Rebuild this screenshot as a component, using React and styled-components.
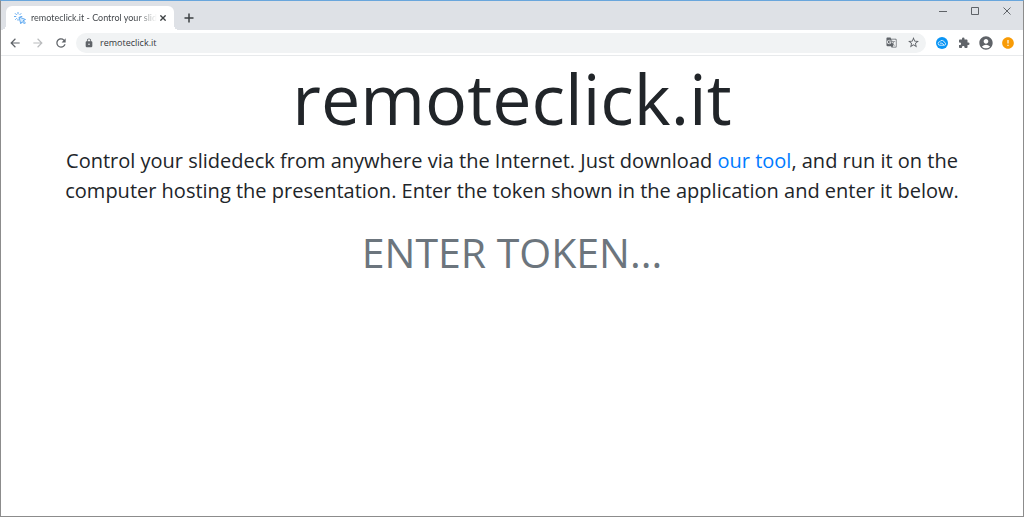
import styled, { createGlobalStyle } from 'styled-components';
import {
  MdAccountCircle,
  MdArrowBack,
  MdArrowForward,
  MdError,
  MdExtension,
  MdGTranslate,
  MdLock,
  MdRefresh,
  MdStarBorder,
} from 'react-icons/md';

const GlobalStyle = createGlobalStyle`
  *, *::before, *::after {
    box-sizing: border-box;
  }

  body {
    margin: 0;
    background: #ffffff;
    color: #212529;
    font-family: 'Open Sans', sans-serif;
  }
`;

const WindowFrame = styled.div`
  min-height: 100vh;
  display: flex;
  flex-direction: column;
  border: 1px solid #8c8c8c;
  border-top-color: #69a6dc;
`;

const TitleBar = styled.div`
  height: 29px;
  display: flex;
  align-items: flex-end;
  justify-content: space-between;
  padding-left: 5px;
  background: #dee1e6;
`;

const TabStrip = styled.div`
  display: flex;
  align-items: center;
  gap: 5px;
`;

const Tab = styled.div`
  position: relative;
  width: 168px;
  height: 24px;
  display: flex;
  align-items: center;
  padding: 0 5px 0 8px;
  border-radius: 6px 6px 0 0;
  background: #ffffff;

  &::before,
  &::after {
    content: '';
    position: absolute;
    bottom: 0;
    width: 5px;
    height: 5px;
  }

  &::before {
    right: 100%;
    background: radial-gradient(circle at 0 0, transparent 5px, #ffffff 5px);
  }

  &::after {
    left: 100%;
    background: radial-gradient(circle at 100% 0, transparent 5px, #ffffff 5px);
  }
`;

const TabTitle = styled.span`
  flex: 1;
  min-width: 0;
  margin-left: 5px;
  overflow: hidden;
  color: #45494d;
  font-family: Lato, sans-serif;
  font-size: 9px;
  line-height: 14px;
  white-space: nowrap;
  mask-image: linear-gradient(to right, #000 84%, transparent);
`;

const IconButton = styled.button`
  width: ${({ $width }) => $width || 16}px;
  height: 16px;
  flex: none;
  display: flex;
  align-items: center;
  justify-content: center;
  padding: 0;
  border: 0;
  background: none;
  color: ${({ $color }) => $color || '#5f6368'};
  cursor: pointer;

  &:disabled {
    color: #babcbe;
    cursor: default;
  }
`;

const WindowControls = styled.div`
  align-self: flex-start;
  display: flex;
  padding-top: 2px;
`;

const Toolbar = styled.div`
  height: 26px;
  display: flex;
  align-items: center;
  padding: 0 7px 0 6px;
  border-bottom: 1px solid #e8eaec;
  background: #ffffff;
`;

const NavButtons = styled.div`
  display: flex;
  gap: 7px;
  margin-right: 7px;
`;

const AddressBar = styled.div`
  flex: 1;
  height: 20px;
  display: flex;
  align-items: center;
  gap: 6px;
  padding: 0 5px 0 8px;
  border-radius: 10px;
  background: #f1f3f4;
  color: #5f6368;
`;

const AddressInput = styled.input`
  flex: 1;
  min-width: 0;
  padding: 0;
  border: 0;
  outline: 0;
  background: none;
  color: #35383c;
  font-family: inherit;
  font-size: 9px;
  line-height: 14px;
`;

const Extensions = styled.div`
  display: flex;
  gap: 6px;
  margin-left: 8px;
`;

const Page = styled.main`
  flex: 1;
  padding: 0 48px;
  text-align: center;
`;

const Title = styled.h1`
  margin: 0;
  font-size: 70px;
  font-weight: 400;
  line-height: 84px;
`;

const Lead = styled.p`
  margin: 6px 0 16px;
  font-size: 20px;
  line-height: 30px;
`;

const ToolLink = styled.a`
  color: #007bff;
  text-decoration: none;
`;

const TokenInput = styled.input`
  display: block;
  width: 100%;
  height: 60px;
  padding: 0;
  border: 0;
  outline: 0;
  background: none;
  color: #495057;
  font-family: inherit;
  font-size: 41px;
  text-align: center;
  text-transform: uppercase;

  &::placeholder {
    color: #6c757d;
    opacity: 1;
  }
`;

const ClickLogo = () => (
  <svg width="12" height="12" viewBox="0 0 24 24" fill="none" stroke="#55a3ef" strokeWidth="1.8">
    <path d="M8 0v4.500M2 2.500l3.500 3.500M0 9h4.500M2.500 15.500l3-3M8 13.500v4M14.500 2.500l-3.500 3.500M16.500 9h-4" />
    <path d="m10 10 13 5-5 2.500 5 4-2 2-5-4-2.500 4z" fill="#d9ecfd" />
  </svg>
);

const CloudBadge = () => (
  <svg width="12" height="12" viewBox="0 0 24 24">
    <circle cx="12" cy="12" r="12" fill="#0a95f5" />
    <path
      d="M8 16.500a3.500 3.500 0 0 1-.5-7 5 5 0 0 1 9.300 1.300 2.900 2.900 0 0 1 .2 5.700zM8 12.500c3-1 5 0 8 3.500"
      fill="none"
      stroke="#ffffff"
      strokeWidth="1.500"
    />
  </svg>
);

const Cross = ({ size, weight }) => (
  <svg width={size} height={size} viewBox="0 0 8 8" stroke="currentColor" strokeWidth={weight}>
    <path d="m.5.5 7 7m0-7-7 7" />
  </svg>
);

export default function App() {
  return (
    <>
      <GlobalStyle />
      <WindowFrame>
        <TitleBar>
          <TabStrip>
            <Tab>
              <ClickLogo />
              <TabTitle>remoteclick.it - Control your slide</TabTitle>
              <IconButton $width={12} $color="#3c4043" aria-label="Close tab">
                <Cross size={6} weight={1.8} />
              </IconButton>
            </Tab>
            <IconButton $width={20} $color="#3c4043" aria-label="New tab">
              <svg width="10" height="10" viewBox="0 0 10 10" stroke="currentColor" strokeWidth="1.500">
                <path d="M5 .5v9M.5 5h9" />
              </svg>
            </IconButton>
          </TabStrip>
          <WindowControls>
            <IconButton $width={32} aria-label="Minimize">
              <svg width="8" height="8" viewBox="0 0 8 8" stroke="currentColor">
                <path d="M0 4.500h8" />
              </svg>
            </IconButton>
            <IconButton $width={32} aria-label="Maximize">
              <svg width="8" height="8" viewBox="0 0 8 8" fill="none" stroke="currentColor">
                <path d="M.5.5h7v7h-7z" />
              </svg>
            </IconButton>
            <IconButton $width={32} aria-label="Close window">
              <Cross size={8} weight={1} />
            </IconButton>
          </WindowControls>
        </TitleBar>

        <Toolbar>
          <NavButtons>
            <IconButton aria-label="Back">
              <MdArrowBack size={14} />
            </IconButton>
            <IconButton aria-label="Forward" disabled>
              <MdArrowForward size={14} />
            </IconButton>
            <IconButton aria-label="Reload">
              <MdRefresh size={14} />
            </IconButton>
          </NavButtons>
          <AddressBar>
            <MdLock size={10} />
            <AddressInput aria-label="Address" defaultValue="remoteclick.it" />
            <IconButton aria-label="Translate this page">
              <MdGTranslate size={11} />
            </IconButton>
            <IconButton aria-label="Bookmark this page">
              <MdStarBorder size={13} />
            </IconButton>
          </AddressBar>
          <Extensions>
            <IconButton aria-label="Cloud extension">
              <CloudBadge />
            </IconButton>
            <IconButton aria-label="Extensions">
              <MdExtension size={12} />
            </IconButton>
            <IconButton aria-label="Profile">
              <MdAccountCircle size={16} />
            </IconButton>
            <IconButton $color="#f89b06" aria-label="Update available">
              <MdError size={14} />
            </IconButton>
          </Extensions>
        </Toolbar>

        <Page>
          <Title>remoteclick.it</Title>
          <Lead>
            Control your slidedeck from anywhere via the Internet. Just download{' '}
            <ToolLink href="#download">our tool</ToolLink>, and run it on the computer hosting the
            presentation. Enter the token shown in the application and enter it below.
          </Lead>
          <TokenInput aria-label="Token" placeholder="Enter token..." />
        </Page>
      </WindowFrame>
    </>
  );
}
